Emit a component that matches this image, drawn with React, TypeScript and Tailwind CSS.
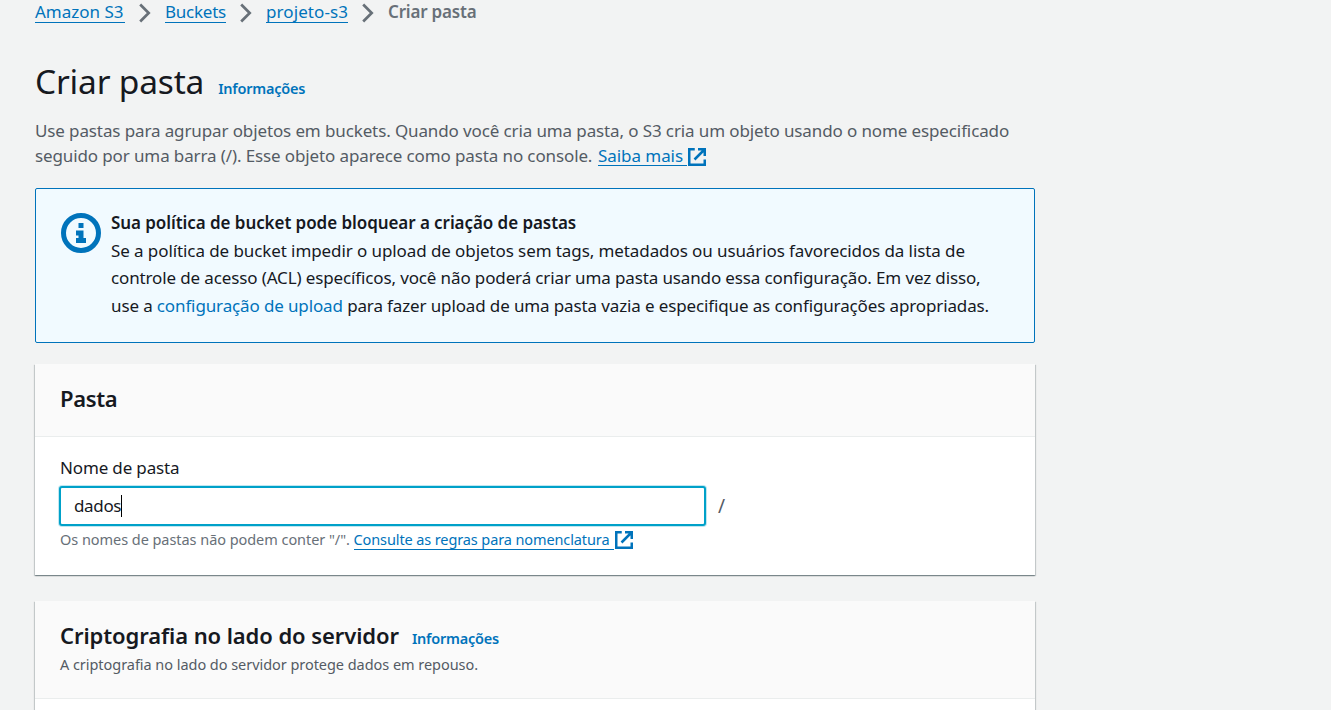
import type { ReactNode } from 'react';

function Chevron() {
  return (
    <svg className="mx-[14px] mt-[3px] h-5 w-3 shrink-0" viewBox="0 0 12 20" fill="none" stroke="#687078" strokeWidth="2.7">
      <path d="M1.2 1.5 9.7 10 1.2 18.5" />
    </svg>
  );
}

function ExternalIcon({ className }: { className: string }) {
  return (
    <svg className={className} viewBox="0 0 20 20" fill="none" stroke="#0073bb" strokeWidth="2.5">
      <path d="M17.75 12.5v5.25H2.25V2.25h5.5M11 2.25h6.75v6.75M17.5 2.5 7.5 12.5" />
    </svg>
  );
}

function InfoIcon() {
  return (
    <svg className="mt-6 h-10 w-10 shrink-0" viewBox="0 0 40 40">
      <circle cx="20" cy="20" r="17.5" fill="none" stroke="#0073bb" strokeWidth="5" />
      <path fill="#0073bb" d="M17.5 10h5v5h-5zM15 17.5h7.5V25H25v5H15v-5h2.5v-2.5H15z" />
    </svg>
  );
}

function Crumb({ children, className }: { children: ReactNode; className: string }) {
  return (
    <a href="#" className={`block h-[23px] border-b border-[#0073bb] leading-[24px] whitespace-nowrap text-[#0073bb] ${className}`}>
      {children}
    </a>
  );
}

function Card({ children, className }: { children: ReactNode; className: string }) {
  return (
    <section className={`bg-white shadow-[0_1px_1px_0_rgba(0,28,36,0.3),1px_1px_1px_0_rgba(0,28,36,0.15),-1px_1px_1px_0_rgba(0,28,36,0.15)] ${className}`}>
      {children}
    </section>
  );
}

export default function App() {
  return (
    <div className="h-[710px] overflow-hidden bg-[#f2f3f3] font-['Noto_Sans','Open_Sans',sans-serif] text-[17px] text-[#16191f]">
      <main className="ml-[35px] w-[1000px]">
        <nav className="flex h-[23px]">
          <Crumb className="w-[90px]">Amazon S3</Crumb>
          <Chevron />
          <Crumb className="w-[61px] tracking-[-0.24px]">Buckets</Crumb>
          <Chevron />
          <Crumb className="w-[82px] tracking-[0.08px]">projeto-s3</Crumb>
          <Chevron />
          <span className="leading-[24px] font-semibold tracking-[-0.2px] whitespace-nowrap text-[#687078]">Criar pasta</span>
        </nav>

        <header className="mt-[36px]">
          <div className="flex h-[44px] items-baseline">
            <h1 className="text-[33.5px] leading-[44px] tracking-[-0.2px]">Criar pasta</h1>
            <a href="#" className="ml-[14px] text-[14.5px] font-semibold tracking-[-0.23px] text-[#0073bb]">Informações</a>
          </div>
          <p className="mt-[15px] leading-[25px] tracking-[-0.12px] whitespace-nowrap text-[#545b64]">
            Use pastas para agrupar objetos em buckets. Quando você cria uma pasta, o S3 cria um objeto usando o nome especificado
            <br />
            <span className="flex">
              <span className="w-[563px]">seguido por uma barra (/). Esse objeto aparece como pasta no console.</span>
              <a href="#" className="flex text-[#0073bb]">
                <span className="h-[23px] w-[89px] border-b border-[#0073bb] tracking-[-0.06px]">Saiba mais</span>
                <ExternalIcon className="mt-1 h-5 w-5" />
              </a>
            </span>
          </p>
        </header>

        <section className="mt-5 flex h-[155px] rounded-[2px] border border-[#0073bb] bg-[#f1faff] pl-[25px]">
          <InfoIcon />
          <div className="mt-5 ml-[10px] leading-[27.5px] whitespace-nowrap">
            <h2 className="font-semibold tracking-[-0.07px]">Sua política de bucket pode bloquear a criação de pastas</h2>
            <p className="tracking-[-0.13px]">
              <span className="tracking-[-0.09px]">Se a política de bucket impedir o upload de objetos sem tags, metadados ou usuários favorecidos da lista de</span>
              <br />
              controle de acesso (ACL) específicos, você não poderá criar uma pasta usando essa configuração. Em vez disso,
              <br />
              use a <a href="#" className="text-[#0073bb]">configuração de upload</a> para fazer upload de uma pasta vazia e especifique as configurações apropriadas.
            </p>
          </div>
        </section>

        <Card className="mt-[21px] h-[211px]">
          <header className="h-[73px] border-b border-[#eaeded] bg-[#fafafa] px-[25px] pt-[19px]">
            <h2 className="text-[22px] leading-[30px] font-semibold tracking-[-0.35px]">Pasta</h2>
          </header>
          <div className="px-[25px] pt-[18px]">
            <label htmlFor="name" className="block leading-[25px] tracking-[-0.15px]">Nome de pasta</label>
            <div className="mt-[6px] flex items-center">
              <div id="name" className="-ml-px flex h-[40px] w-[647px] items-center rounded-[3px] border-2 border-[#00a1c9] bg-white pl-[13px] shadow-[0_0_0_1px_rgba(0,161,201,0.25)]">
                <span className="tracking-[-0.35px]">dados</span>
                <span className="h-[22px] w-px bg-black" />
              </div>
              <span className="ml-3 text-[19px] leading-6 text-[#545b64]">/</span>
            </div>
            <div className="flex text-[14.5px] leading-[20px] whitespace-nowrap">
              <span className="mt-[3px] w-[293.5px] tracking-[-0.05px] text-[#687078]">Os nomes de pastas não podem conter "/".</span>
              <a href="#" className="mt-[3px] flex text-[#0073bb]">
                <span className="h-[21px] w-[260.5px] border-b border-[#0073bb] tracking-[-0.11px]">Consulte as regras para nomenclatura</span>
                <ExternalIcon className="mt-px h-5 w-5" />
              </a>
            </div>
          </div>
        </Card>

        <Card className="mt-[26px] h-[200px]">
          <header className="h-[98px] border-b border-[#eaeded] bg-[#fafafa] px-[25px] pt-[19px]">
            <div className="flex h-[30px] items-baseline">
              <h2 className="text-[22px] leading-[30px] font-semibold tracking-[-0.09px]">Criptografia no lado do servidor</h2>
              <a href="#" className="ml-[13px] text-[14.5px] font-semibold tracking-[-0.23px] text-[#0073bb]">Informações</a>
            </div>
            <p className="mt-1 text-[14.5px] leading-[20px] tracking-[-0.045px] text-[#545b64]">A criptografia no lado do servidor protege dados em repouso.</p>
          </header>
        </Card>
      </main>
    </div>
  );
}
